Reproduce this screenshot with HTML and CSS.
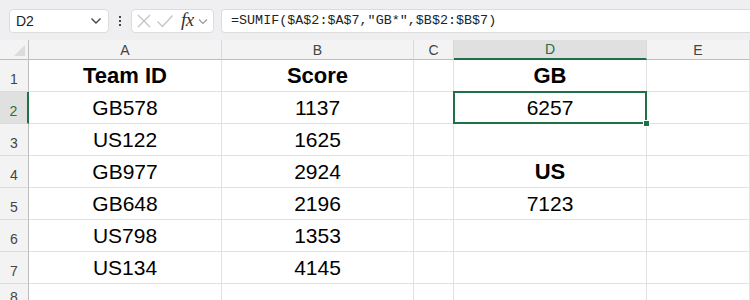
FILE: index.html
```html
<!DOCTYPE html>
<html>
    <head>
        <meta charset="utf-8">
        <title>SUMIF</title>
        <link rel="stylesheet" href="styles.css">
    </head>
    <body>
        <div class="toolbar">
            <div class="name-box">
                <span>D2</span>
                <svg width="12" height="8" viewBox="0 0 12 8"><path d="M1.5 1.5 L6 6 L10.5 1.5" fill="none" stroke="#444" stroke-width="1.4"/></svg>
            </div>
            <div class="dots">
                <span></span><span></span><span></span>
            </div>
            <div class="fn-box">
                <svg width="16" height="16" viewBox="0 0 16 16"><path d="M2 2 L14 14 M14 2 L2 14" fill="none" stroke="#c4c4c4" stroke-width="1.3"/></svg>
                <svg width="18" height="16" viewBox="0 0 18 16"><path d="M1.5 8.5 L6.5 13.5 L16.5 2.5" fill="none" stroke="#c4c4c4" stroke-width="1.3"/></svg>
                <span class="fx">fx</span>
                <svg width="10" height="7" viewBox="0 0 10 7"><path d="M1 1.5 L5 5.5 L9 1.5" fill="none" stroke="#999" stroke-width="1.2"/></svg>
            </div>
            <div class="formula">=SUMIF($A$2:$A$7,"GB*",$B$2:$B$7)</div>
        </div>

        <div class="sheet">
            <div class="corner"><span></span></div>
            <div class="col-head">A</div>
            <div class="col-head">B</div>
            <div class="col-head">C</div>
            <div class="col-head active">D</div>
            <div class="col-head">E</div>

            <div class="row-head">1</div>
            <div class="cell bold">Team ID</div>
            <div class="cell bold">Score</div>
            <div class="cell"></div>
            <div class="cell bold">GB</div>
            <div class="cell"></div>

            <div class="row-head active">2</div>
            <div class="cell">GB578</div>
            <div class="cell">1137</div>
            <div class="cell"></div>
            <div class="cell selected">6257</div>
            <div class="cell"></div>

            <div class="row-head">3</div>
            <div class="cell">US122</div>
            <div class="cell">1625</div>
            <div class="cell"></div>
            <div class="cell"></div>
            <div class="cell"></div>

            <div class="row-head">4</div>
            <div class="cell">GB977</div>
            <div class="cell">2924</div>
            <div class="cell"></div>
            <div class="cell bold">US</div>
            <div class="cell"></div>

            <div class="row-head">5</div>
            <div class="cell">GB648</div>
            <div class="cell">2196</div>
            <div class="cell"></div>
            <div class="cell">7123</div>
            <div class="cell"></div>

            <div class="row-head">6</div>
            <div class="cell">US798</div>
            <div class="cell">1353</div>
            <div class="cell"></div>
            <div class="cell"></div>
            <div class="cell"></div>

            <div class="row-head">7</div>
            <div class="cell">US134</div>
            <div class="cell">4145</div>
            <div class="cell"></div>
            <div class="cell"></div>
            <div class="cell"></div>

            <div class="row-head last">8</div>
            <div class="cell"></div>
            <div class="cell"></div>
            <div class="cell"></div>
            <div class="cell"></div>
            <div class="cell"></div>
        </div>
    </body>
</html>
```

FILE: styles.css
```css
body {
    margin: 0;
    width: 750px;
    height: 300px;
    overflow: hidden;
    background: #ffffff;
    font-family: "Liberation Sans", Arial, sans-serif;
}
.toolbar {
    height: 40px;
    background: #efeff1;
    display: flex;
    align-items: flex-start;
    padding: 9px 0 0 9px;
    box-sizing: border-box;
}
.name-box {
    width: 100px;
    height: 24px;
    box-sizing: border-box;
    background: #fff;
    border: 1px solid #dcdcdc;
    border-radius: 4px;
    display: flex;
    align-items: center;
    justify-content: space-between;
    padding: 0 6px 0 6px;
    font-size: 14px;
    color: #222;
}
.dots {
    width: 22px;
    height: 24px;
    display: flex;
    flex-direction: column;
    align-items: center;
    justify-content: center;
    gap: 2px;
}
.dots span {
    width: 2px;
    height: 2px;
    background: #444;
}
.fn-box {
    width: 83px;
    height: 24px;
    box-sizing: border-box;
    background: #fff;
    border: 1px solid #dcdcdc;
    border-radius: 4px;
    display: flex;
    align-items: center;
    padding: 0 4px 0 4px;
    gap: 4px;
}
.fn-box .fx {
    font-family: "Liberation Serif", serif;
    font-style: italic;
    font-size: 19px;
    color: #333;
    margin-left: 3px;
    margin-top: -2px;
    letter-spacing: -0.5px;
}
.formula {
    margin-left: 7px;
    flex: 1;
    height: 24px;
    box-sizing: border-box;
    background: #fff;
    border: 1px solid #dcdcdc;
    border-right: none;
    border-radius: 4px 0 0 4px;
    padding: 0 0 0 9px;
    line-height: 22px;
    font-family: "Liberation Mono", monospace;
    font-size: 13.4px;
    color: #222;
}
.sheet {
    display: grid;
    grid-template-columns: 29px 193px 192px 40px 193px 1fr;
    grid-template-rows: 20px repeat(8, 32px);
}
.corner {
    background: #f3f3f3;
    border-right: 1px solid #bdbdbd;
    border-bottom: 1px solid #bdbdbd;
    position: relative;
}
.corner span {
    position: absolute;
    right: 3px;
    bottom: 3px;
    width: 0;
    height: 0;
    border-left: 11px solid transparent;
    border-bottom: 11px solid #dcdcdc;
}
.col-head {
    background: #f3f3f3;
    border-right: 1px solid #dadada;
    border-bottom: 1px solid #bdbdbd;
    display: flex;
    align-items: center;
    justify-content: center;
    font-size: 14px;
    color: #444;
}
.col-head.active {
    background: #e0e0e0;
    border-bottom: 2px solid #1e7145;
    color: #1e7145;
}
.row-head {
    background: #f3f3f3;
    border-right: 1px solid #bdbdbd;
    border-bottom: 1px solid #dadada;
    display: flex;
    align-items: flex-end;
    justify-content: center;
    padding-bottom: 4px;
    box-sizing: border-box;
    font-size: 14px;
    color: #444;
}
.row-head.last {
    align-items: flex-start;
    padding-top: 5px;
}
.row-head.active {
    background: #e0e0e0;
    border-right: 2px solid #1e7145;
    color: #1e7145;
}
.cell {
    border-right: 1px solid #e1e1e1;
    border-bottom: 1px solid #e1e1e1;
    display: flex;
    align-items: flex-end;
    justify-content: center;
    padding-bottom: 3px;
    box-sizing: border-box;
    font-size: 21px;
    line-height: 24px;
    color: #000;
}
.cell.bold {
    font-weight: bold;
    font-size: 22px;
}
.cell.selected {
    position: relative;
}
.cell.selected::after {
    content: "";
    position: absolute;
    left: -1px;
    top: -1px;
    right: -1px;
    bottom: -1px;
    border: 2px solid #1e7145;
}
.cell.selected::before {
    content: "";
    position: absolute;
    right: -4px;
    bottom: -4px;
    width: 5px;
    height: 5px;
    background: #1e7145;
    border: 1px solid #fff;
    z-index: 1;
}
```
